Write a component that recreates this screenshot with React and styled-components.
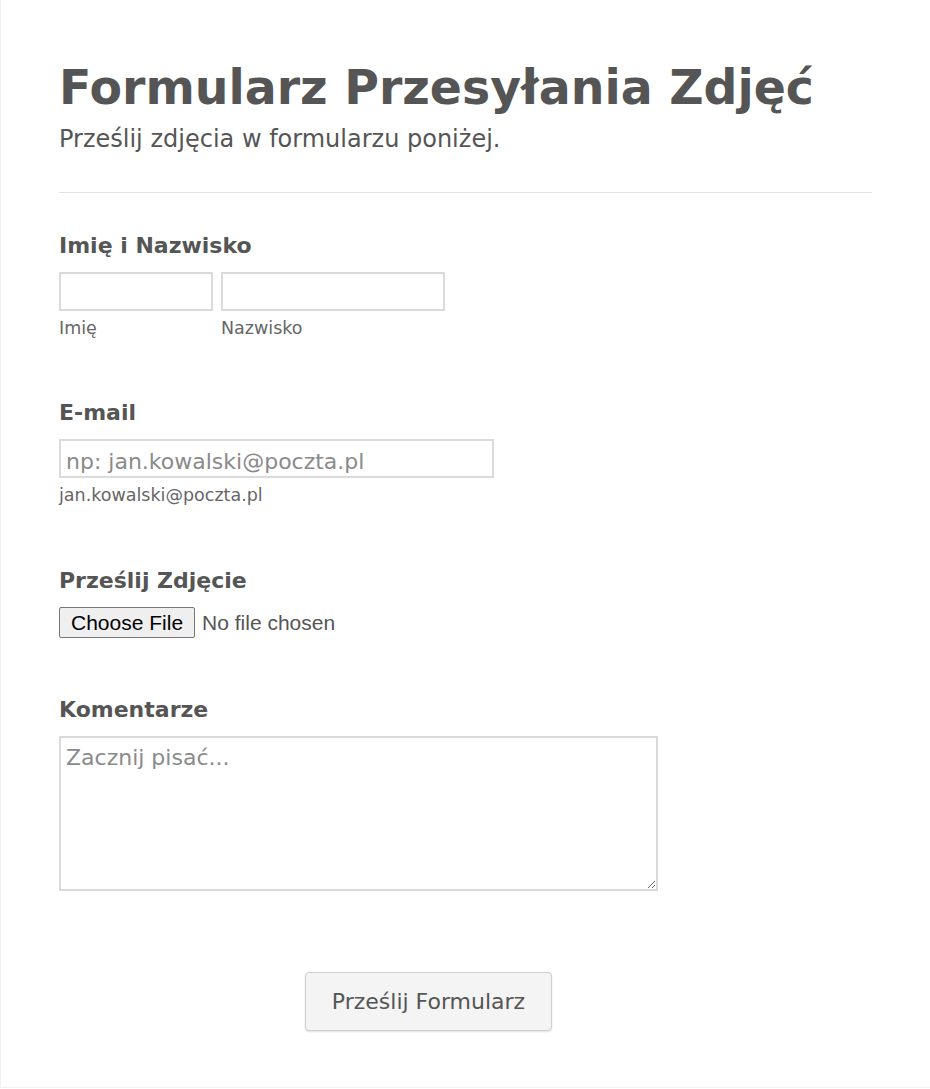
import React from "react";
import styled, { createGlobalStyle } from "styled-components";

const GlobalStyle = createGlobalStyle`
  html, body {
    margin: 0;
    padding: 0;
    background: #ffffff;
  }
  body {
    font-family: "DejaVu Sans", Verdana, sans-serif;
    color: #555555;
  }
  * {
    box-sizing: border-box;
  }
`;

const FormWrapper = styled.form`
  width: 930px;
  height: 1088px;
  border-left: 1px solid #f1f1f1;
  border-bottom: 1px solid #f1f1f1;
  padding: 58px 58px 0 58px;
`;

const Header = styled.div`
  padding-bottom: 38px;
  border-bottom: 1px solid #e3e3e3;
`;

const Title = styled.h1`
  margin: 0;
  font-size: 47.4px;
  font-weight: 700;
  line-height: 60px;
  color: #555555;
`;

const Subtitle = styled.p`
  margin: 6px 0 0;
  font-size: 24px;
  line-height: 30px;
  color: #555555;
`;

const Field = styled.div`
  padding-top: ${(p) => p.$top || 60}px;
`;

const Label = styled.label`
  display: block;
  font-size: 22px;
  font-weight: 700;
  line-height: 28px;
  margin-bottom: 12px;
`;

const Row = styled.div`
  display: flex;
  gap: 8px;
`;

const Column = styled.div`
  display: flex;
  flex-direction: column;
`;

const TextInput = styled.input`
  width: ${(p) => p.$width}px;
  height: 39px;
  border: 2px solid #dadada;
  padding: 6px 5px 0;
  font-family: "DejaVu Sans", Verdana, sans-serif;
  font-size: 22px;
  color: #555555;
  outline: none;

  &::placeholder {
    color: #8a8a8a;
  }
`;

const SubLabel = styled.span`
  font-size: 17.5px;
  line-height: 22px;
  margin-top: 6px;
  color: #666666;
`;

const FileInput = styled.input`
  display: block;
  height: 31px;
  font-family: "Liberation Sans", Arial, sans-serif;
  font-size: 21px;
  color: #555555;

  &::file-selector-button {
    font-family: "Liberation Sans", Arial, sans-serif;
    font-size: 21px;
    color: #000000;
    padding: 0 11px;
    margin-right: 7px;
    height: 31px;
    border: 1px solid #767676;
    border-radius: 2px;
    background: #efefef;
  }
`;

const TextArea = styled.textarea`
  display: block;
  width: 599px;
  height: 155px;
  border: 2px solid #dadada;
  padding: 7px 5px;
  font-family: "DejaVu Sans", Verdana, sans-serif;
  font-size: 22px;
  color: #555555;
  outline: none;

  &::placeholder {
    color: #8a8a8a;
  }
`;

const Actions = styled.div`
  display: flex;
  padding-top: 81px;
  padding-left: 246px;
`;

const SubmitButton = styled.button`
  width: 247px;
  height: 59px;
  border: 1px solid #cfcfcf;
  border-radius: 4px;
  background: #f4f4f4;
  box-shadow: 0 1px 2px rgba(0, 0, 0, 0.12);
  font-family: "DejaVu Sans", Verdana, sans-serif;
  font-size: 22px;
  color: #555555;
  cursor: pointer;
`;

export default function App() {
  return (
    <>
      <GlobalStyle />
      <FormWrapper onSubmit={(e) => e.preventDefault()}>
        <Header>
          <Title>Formularz Przesyłania Zdjęć</Title>
          <Subtitle>Prześlij zdjęcia w formularzu poniżej.</Subtitle>
        </Header>

        <Field $top={39}>
          <Label>Imię i Nazwisko</Label>
          <Row>
            <Column>
              <TextInput $width={154} />
              <SubLabel>Imię</SubLabel>
            </Column>
            <Column>
              <TextInput $width={224} />
              <SubLabel>Nazwisko</SubLabel>
            </Column>
          </Row>
        </Field>

        <Field $top={60}>
          <Label>E-mail</Label>
          <Column>
            <TextInput $width={435} placeholder="np: jan.kowalski@poczta.pl" />
            <SubLabel>jan.kowalski@poczta.pl</SubLabel>
          </Column>
        </Field>

        <Field $top={61}>
          <Label>Prześlij Zdjęcie</Label>
          <FileInput type="file" accept="image/*" />
        </Field>

        <Field $top={58}>
          <Label>Komentarze</Label>
          <TextArea placeholder="Zacznij pisać..." />
        </Field>

        <Actions>
          <SubmitButton type="submit">Prześlij Formularz</SubmitButton>
        </Actions>
      </FormWrapper>
    </>
  );
}
